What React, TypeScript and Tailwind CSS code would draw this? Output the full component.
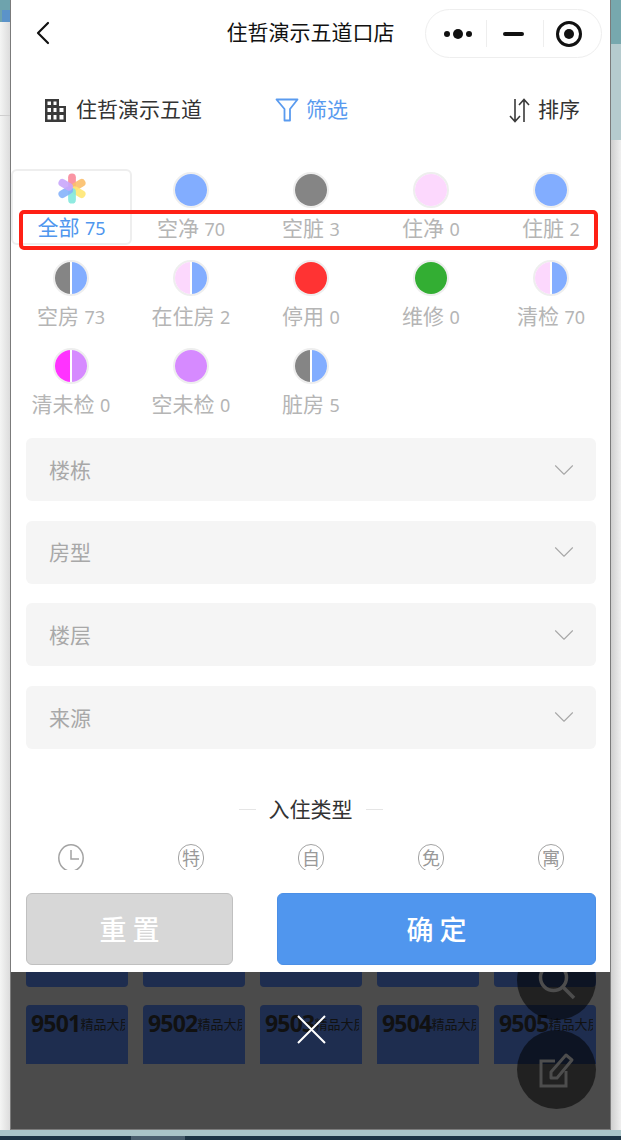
import { ChevronLeft, ChevronDown } from "lucide-react";

const fontStack = "font-['Noto_Sans','Noto_Sans_CJK_SC',sans-serif]";

type Status = {
  label: string;
  count: number;
  left: string;
  right?: string;
};

const BLUE = "bg-[#82adff]";
const GRAY = "bg-[#858585]";
const PINK = "bg-[#fcd8fd]";

const statuses: Status[] = [
  { label: "空净", count: 70, left: BLUE },
  { label: "空脏", count: 3, left: GRAY },
  { label: "住净", count: 0, left: PINK },
  { label: "住脏", count: 2, left: BLUE },
  { label: "空房", count: 73, left: GRAY, right: BLUE },
  { label: "在住房", count: 2, left: PINK, right: BLUE },
  { label: "停用", count: 0, left: "bg-[#ff3333]" },
  { label: "维修", count: 0, left: "bg-[#33ae33]" },
  { label: "清检", count: 70, left: PINK, right: BLUE },
  { label: "清未检", count: 0, left: "bg-[#ff33ff]", right: "bg-[#d68aff]" },
  { label: "空未检", count: 0, left: "bg-[#d68aff]" },
  { label: "脏房", count: 5, left: GRAY, right: BLUE },
];

const selects = ["楼栋", "房型", "楼层", "来源"];
const stayTypes = ["特", "自", "免", "寓"];
const rooms = ["9501", "9502", "9503", "9504", "9505"];

const petals = [
  { angle: 0, color: "#f98a9a" },
  { angle: 60, color: "#fbbf6a" },
  { angle: 120, color: "#ffe773" },
  { angle: 180, color: "#83e8dd" },
  { angle: 240, color: "#85b2fb" },
  { angle: 300, color: "#c9a6fb" },
];

function Flower() {
  return (
    <svg width="32" height="32" viewBox="-16 -16 32 32">
      {petals.map((p) => (
        <rect
          key={p.angle}
          x="-4"
          y="-15.500"
          width="8"
          height="16"
          rx="4"
          fill={p.color}
          opacity="0.9"
          transform={`rotate(${p.angle})`}
        />
      ))}
    </svg>
  );
}

function Dot({ left, right }: { left: string; right?: string }) {
  return (
    <div className="flex w-9 h-9 rounded-full border-2 border-[#eeeeee] overflow-hidden bg-white">
      {right ? (
        <>
          <div className={`w-[15px] h-full ${left}`} />
          <div className="w-[2px] h-full bg-white" />
          <div className={`w-[15px] h-full ${right}`} />
        </>
      ) : (
        <div className={`w-full h-full ${left}`} />
      )}
    </div>
  );
}

function BuildingIcon() {
  return (
    <svg width="23" height="25" viewBox="0 0 23 25">
      <path
        fillRule="evenodd"
        fill="#3a3a3a"
        d="M1 1h14v7h7v16H1zM3.500 3.500v3.500h3.500V3.500zM9.500 3.500v3.500h3V3.500zM3.500 10v4h3.500v-4zM9.500 10v4h3v-4zM15.500 10v4h4v-4zM3.500 17v4.500h3.500V17zM9.500 17v4.500h3V17zM15.500 17v4.500h4V17z"
      />
    </svg>
  );
}

function FilterIcon() {
  return (
    <svg width="24" height="24" viewBox="0 0 24 24" fill="none" stroke="#5a9bef" strokeWidth="1.8" strokeLinejoin="round">
      <path d="M1.500 1.500h21L15 11v11.500H9.500V11z" />
    </svg>
  );
}

function SortIcon() {
  return (
    <svg width="21" height="25" viewBox="0 0 21 25" fill="none" stroke="#3a3a3a" strokeWidth="1.6">
      <path d="M6 1v22M1 18l5 5.500 5-5.500" />
      <path d="M15 24V2M10 7l5-5.500L20 7" />
    </svg>
  );
}

function ClockIcon() {
  return (
    <svg width="26" height="28" viewBox="0 0 26 28" fill="none" stroke="#a3a3a3" strokeWidth="1.500">
      <ellipse cx="13" cy="14" rx="12.200" ry="13.200" />
      <path d="M13 6v9h8" />
    </svg>
  );
}

function SearchIcon() {
  return (
    <svg width="38" height="38" viewBox="0 0 38 38" fill="none" stroke="#4d4d4d" strokeWidth="3.500">
      <circle cx="15.500" cy="15.500" r="13" />
      <path d="M25 25l11 11" />
    </svg>
  );
}

function EditIcon() {
  return (
    <svg width="36" height="38" viewBox="0 0 36 38" fill="none" stroke="#4d4d4d" strokeWidth="3">
      <path d="M16 10H2v25h25V20" />
      <path d="M12 27v-6L27 4l6 5-15 18z" strokeLinejoin="round" />
    </svg>
  );
}

export default function App() {
  return (
    <div className={`flex flex-col w-[621px] h-[1140px] overflow-hidden bg-white ${fontStack}`}>
      <div className="flex h-[1130px]">
        {/* page behind the phone frame, left edge */}
        <div className="w-[10px] flex flex-col bg-gradient-to-r from-[#f4f5f4] to-[#dcdcdc]">
          <div className="h-[22px] bg-[#6ea3ad] flex items-end justify-end">
            <div className="w-2 h-3 bg-[#5b93c9]" />
          </div>
          <div className="mt-[93px] h-px bg-[#cfcfcf]" />
        </div>

        <div className="w-[601px] flex flex-col border-x border-b border-[#7b7b7b]">
          <div className="h-[972px] flex flex-col bg-white shrink-0">
            {/* nav bar */}
            <div className="relative h-[66px] shrink-0 flex items-center justify-center pb-[1px]">
              <ChevronLeft className="absolute left-[12px] top-[13px] text-[#111111]" size={40} strokeWidth={1.3} />
              <span className="text-[21px] text-[#111111]">住哲演示五道口店</span>
              <div className="absolute left-[414px] top-[9px] w-[177px] h-[49px] flex items-center rounded-full border border-[#eeeeee]">
                <div className="w-[60px] flex items-center justify-center gap-[3px] pl-[4px]">
                  <span className="w-[6px] h-[6px] rounded-full bg-[#111111]" />
                  <span className="w-[10px] h-[10px] rounded-full bg-[#111111]" />
                  <span className="w-[6px] h-[6px] rounded-full bg-[#111111]" />
                </div>
                <div className="w-px h-[27px] bg-[#eeeeee]" />
                <div className="w-[56px] flex justify-center pr-[3px]">
                  <span className="w-[21px] h-[4px] rounded-full bg-[#111111]" />
                </div>
                <div className="w-px h-[27px] bg-[#eeeeee]" />
                <div className="flex-1 flex justify-center pr-[8px]">
                  <span className="w-[26px] h-[26px] rounded-full border-[3px] border-[#111111] flex items-center justify-center">
                    <span className="w-[10px] h-[10px] rounded-full bg-[#111111]" />
                  </span>
                </div>
              </div>
            </div>

            {/* toolbar */}
            <div className="relative h-[88px] shrink-0 flex items-center text-[21px] text-[#333333]">
              <div className="ml-[33px] w-[231px] flex items-center gap-[9px]">
                <BuildingIcon />
                <span>住哲演示五道</span>
              </div>
              <div className="flex items-center gap-[7px] text-[#5a9bef]">
                <FilterIcon />
                <span>筛选</span>
              </div>
              <div className="ml-auto mr-[30px] flex items-center gap-[8px]">
                <SortIcon />
                <span>排序</span>
              </div>
            </div>

            {/* scroll area, clipped just above the buttons */}
            <div className="relative h-[716px] shrink-0 overflow-hidden pt-[15px]">
              <div className="grid grid-cols-[repeat(5,120px)] gap-y-[12px]">
                <div className="h-[76px] w-[121px] rounded-md border-2 border-[#eeeeee] flex flex-col items-center pt-[2px]">
                  <Flower />
                  <div className="mt-[8px] text-[21px] leading-[30px] text-[#4f96ee] whitespace-nowrap">
                    全部 <span className="text-[18px]">75</span>
                  </div>
                </div>
                {statuses.map((s) => (
                  <div key={s.label} className="h-[76px] flex flex-col items-center pt-[3px]">
                    <Dot left={s.left} right={s.right} />
                    <div className="mt-[5px] text-[21px] leading-[30px] text-[#b5b5b5] whitespace-nowrap">
                      {s.label} <span className="text-[18px]">{s.count}</span>
                    </div>
                  </div>
                ))}
              </div>

              <div className="mt-[17px] ml-[15px] mr-[14px] flex flex-col gap-[19.67px]">
                {selects.map((name) => (
                  <div key={name} className="h-[63px] rounded-md bg-[#f5f5f5] flex items-center justify-between pl-[23px] pr-[15px]">
                    <span className="text-[21px] text-[#a8a8a8] pt-[2px]">{name}</span>
                    <ChevronDown className="text-[#a8a8a8]" size={34} strokeWidth={0.8} />
                  </div>
                ))}
              </div>

              <div className="mt-[46px] h-[30px] flex items-center justify-center gap-[13px]">
                <span className="w-[17px] h-px bg-[#e5e5e5]" />
                <span className="text-[21px] text-[#333333]">入住类型</span>
                <span className="w-[17px] h-px bg-[#e5e5e5]" />
              </div>

              <div className="mt-[19px] grid grid-cols-[repeat(5,120px)]">
                <div className="flex justify-center">
                  <ClockIcon />
                </div>
                {stayTypes.map((t) => (
                  <div key={t} className="flex justify-center">
                    <span className="w-[26px] h-[28px] rounded-full border-[1.5px] border-[#a3a3a3] flex items-center justify-center text-[18px] leading-none text-[#999999]">
                      {t}
                    </span>
                  </div>
                ))}
              </div>
            </div>

            {/* footer buttons */}
            <div className="h-[102px] shrink-0 pl-[15px] pr-[14px] pt-[23px] flex justify-between">
              <button className="w-[207px] h-[72px] rounded-md border border-[#c0c0c0] bg-[#d7d7d7] text-[27px] font-medium tracking-[6px] pl-[6px] pt-[2px] text-white">
                重置
              </button>
              <button className="w-[319px] h-[72px] rounded-md border border-[#4b8fe6] bg-[#5096ee] text-[27px] font-medium tracking-[6px] pl-[6px] pt-[2px] text-white">
                确定
              </button>
            </div>
          </div>

          {/* dimmed room list behind the sheet */}
          <div className="relative flex-1 overflow-hidden bg-[#4b4b4b] px-[15px]">
            <div className="grid grid-cols-[repeat(5,102px)] gap-x-[15px]">
              {rooms.map((r) => (
                <div key={r} className="h-[15px] rounded-b-sm bg-[#1e2d4f]" />
              ))}
            </div>
            <div className="mt-[18px] grid grid-cols-[repeat(5,102px)] gap-x-[15px]">
              {rooms.map((r) => (
                <div key={r} className="h-[59px] rounded-t-sm bg-[#1e2d4f] pl-[5px] pr-[3px] overflow-hidden">
                  <div className="flex items-center whitespace-nowrap overflow-hidden text-[#111111] h-[36px]">
                    <span className="text-[23px] font-bold leading-none tracking-[-0.8px]">{r}</span>
                    <span className="text-[13px] leading-none mt-[3px]">精品大房</span>
                  </div>
                </div>
              ))}
            </div>

            <div className="absolute left-[506px] top-[-31px] w-[79px] h-[79px] rounded-full bg-black/55 flex items-center justify-center">
              <SearchIcon />
            </div>
            <div className="absolute left-[506px] top-[58px] w-[79px] h-[79px] rounded-full bg-black/55 flex items-center justify-center">
              <EditIcon />
            </div>
            <svg className="absolute left-[286px] top-[43px]" width="29" height="29" viewBox="0 0 29 29" stroke="#ffffff" strokeWidth="2">
              <path d="M1 1l27 27M28 1L1 28" />
            </svg>
          </div>
        </div>

        {/* page behind the phone frame, right edge */}
        <div className="w-[10px] flex flex-col bg-gradient-to-r from-[#cfcfcf] to-[#efefef]">
          <div className="h-[44px] bg-[#77a8ae]" />
          <div className="h-[96px] bg-[#b5cbce]" />
        </div>
      </div>

      <div className="h-[6px] bg-[#aac5c8]" />
      <div className="h-1 flex bg-[#1d3444]">
        <div className="ml-[131px] w-[54px] bg-[#4a5f6e]" />
      </div>

      {/* red annotation drawn over the screenshot */}
      <div className="absolute left-[19px] top-[210px] w-[579px] h-[40px] rounded-[5px] border-[4px] border-[#ff2015]" />
    </div>
  );
}
